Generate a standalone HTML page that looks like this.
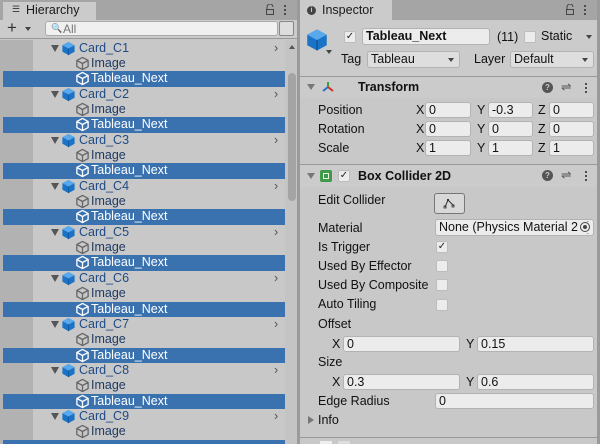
<!DOCTYPE html>
<html style="width:600px;height:444px;overflow:hidden"><head><meta charset="utf-8">
<style>
*{margin:0;padding:0;box-sizing:border-box}
body{width:600px;height:444px;overflow:hidden;background:#c8c8c8;font-family:"Liberation Sans",sans-serif;font-size:12.5px;color:#1a1a1a;position:relative}
.a{position:absolute}
.row{position:absolute;left:3px;width:282px;height:15.4px}
.sel{background:#3a72b0}
.t{position:absolute;top:0;line-height:15px;white-space:nowrap}
.card{color:#1e4a86;left:76px}
.img{color:#1f3a62;left:88px}
.sel .t{color:#fff;left:88px}
.fld{position:absolute;background:#ececec;border:1px solid #b3b3b3;border-radius:3px;height:16px;line-height:14px;padding-left:3px;font-size:12.5px;color:#111;white-space:nowrap;overflow:hidden}
.lbl{position:absolute;line-height:15px;white-space:nowrap;color:#111}
.cb{position:absolute;width:12px;height:12px;background:#ececec;border:1px solid #bdbdbd;border-radius:2px}
.chk{font-size:10px;line-height:10px;text-align:center;color:#222}
.line{position:absolute;height:1px;background:#999}
</style></head><body>
<svg width="0" height="0" style="position:absolute">
<defs>
<symbol id="bc" viewBox="0 0 16 16"><path d="M8 1 L14.5 4.5 L14.5 11.5 L8 15 L1.5 11.5 L1.5 4.5Z" fill="#1b73c8"/><path d="M1.5 4.5 L8 8 L14.5 4.5 L8 1Z" fill="#5aa8ec"/><path d="M8 8 L8 15" stroke="#0e4f94" stroke-width="0.8"/></symbol>
<symbol id="oc" viewBox="0 0 16 16"><path d="M8 1.5 L14 4.7 L14 11.3 L8 14.5 L2 11.3 L2 4.7Z M2 4.7 L8 8 L14 4.7 M8 8 L8 14.5" fill="none" stroke="currentColor" stroke-width="1.4" stroke-linejoin="round"/></symbol>
</defs></svg>

<!-- LEFT PANEL -->
<div class="a" style="left:0;top:0;width:298px;height:20px;background:#a5a5a5"></div>
<div class="a" style="left:3px;top:2px;width:93px;height:19px;background:#cbcbcb"></div>
<div class="a" style="left:12px;top:4px;font-size:9px;color:#333">☰</div>
<div class="a" style="left:26px;top:3px;font-size:12.5px;line-height:15px">Hierarchy</div>
<svg class="a" style="left:265px;top:4px" width="10" height="11"><path d="M2 5 V3 a3 3 0 0 1 6 0" fill="none" stroke="#444" stroke-width="1"/><rect x="1.5" y="5.5" width="7" height="5" fill="none" stroke="#444"/></svg>
<div class="a" style="left:284px;top:4px;width:2px;height:12px;background:radial-gradient(circle,#444 1px,transparent 1.2px) 0 0/2px 4px"></div>
<div class="a" style="left:0;top:20px;width:298px;height:19px;background:#cbcbcb;border-bottom:1px solid #999"></div>
<div class="a" style="left:7px;top:19px;font-size:17px;line-height:18px;color:#333">+</div>
<div class="a" style="left:25px;top:27px;width:0;height:0;border-left:3px solid transparent;border-right:3px solid transparent;border-top:4px solid #444"></div>
<div class="a" style="left:45px;top:21px;width:233px;height:15px;background:#f0f0f0;border:1px solid #aaa;border-radius:3px"></div>
<div class="a" style="left:51px;top:21px;font-size:9px;line-height:15px;color:#666">🔍</div>
<div class="a" style="left:63px;top:22px;font-size:12px;line-height:14px;color:#777">All</div>
<div class="a" style="left:279px;top:21px;width:15px;height:15px;border:1px solid #888;border-radius:2px;background:#ddd"></div>
<div class="a" style="left:0;top:40px;width:33px;height:404px;background:#b2b2b2"></div>
<div class="a" style="left:33px;top:40px;width:252px;height:404px;background:#c8c8c8"></div>
<div class="a" style="left:285px;top:40px;width:12px;height:404px;background:#c4c4c4"></div>
<div class="a" style="left:289px;top:45px;width:0;height:0;border-left:3px solid transparent;border-right:3px solid transparent;border-bottom:4px solid #555"></div>
<div class="a" style="left:288px;top:73px;width:8px;height:128px;background:#a4a4a4;border-radius:4px"></div>
<div class="a" style="left:297px;top:0;width:3px;height:444px;background:#9a9a9a"></div>

<!-- rows -->
<div class="row" style="top:40.5px"><span class="a" style="left:48px;top:4px;border-left:4px solid transparent;border-right:4px solid transparent;border-top:7px solid #555"></span><svg class="a" style="left:58px;top:0" width="15" height="15"><use href="#bc"/></svg><span class="t card">Card_C1</span><span class="a" style="left:271px;top:0;color:#555;line-height:15px">›</span></div>
<div class="row" style="top:55.9px"><svg class="a" style="left:72px;top:0;color:#666" width="15" height="15"><use href="#oc"/></svg><span class="t img">Image</span></div>
<div class="row sel" style="top:71.2px"><svg class="a" style="left:72px;top:0;color:#fff" width="15" height="15"><use href="#oc"/></svg><span class="t">Tableau_Next</span></div>

<div class="row" style="top:86.6px"><span class="a" style="left:48px;top:4px;border-left:4px solid transparent;border-right:4px solid transparent;border-top:7px solid #555"></span><svg class="a" style="left:58px;top:0" width="15" height="15"><use href="#bc"/></svg><span class="t card">Card_C2</span><span class="a" style="left:271px;top:0;color:#555;line-height:15px">›</span></div>
<div class="row" style="top:101.9px"><svg class="a" style="left:72px;top:0;color:#666" width="15" height="15"><use href="#oc"/></svg><span class="t img">Image</span></div>
<div class="row sel" style="top:117.3px"><svg class="a" style="left:72px;top:0;color:#fff" width="15" height="15"><use href="#oc"/></svg><span class="t">Tableau_Next</span></div>

<div class="row" style="top:132.6px"><span class="a" style="left:48px;top:4px;border-left:4px solid transparent;border-right:4px solid transparent;border-top:7px solid #555"></span><svg class="a" style="left:58px;top:0" width="15" height="15"><use href="#bc"/></svg><span class="t card">Card_C3</span><span class="a" style="left:271px;top:0;color:#555;line-height:15px">›</span></div>
<div class="row" style="top:148px"><svg class="a" style="left:72px;top:0;color:#666" width="15" height="15"><use href="#oc"/></svg><span class="t img">Image</span></div>
<div class="row sel" style="top:163.3px"><svg class="a" style="left:72px;top:0;color:#fff" width="15" height="15"><use href="#oc"/></svg><span class="t">Tableau_Next</span></div>

<div class="row" style="top:178.7px"><span class="a" style="left:48px;top:4px;border-left:4px solid transparent;border-right:4px solid transparent;border-top:7px solid #555"></span><svg class="a" style="left:58px;top:0" width="15" height="15"><use href="#bc"/></svg><span class="t card">Card_C4</span><span class="a" style="left:271px;top:0;color:#555;line-height:15px">›</span></div>
<div class="row" style="top:194px"><svg class="a" style="left:72px;top:0;color:#666" width="15" height="15"><use href="#oc"/></svg><span class="t img">Image</span></div>
<div class="row sel" style="top:209.4px"><svg class="a" style="left:72px;top:0;color:#fff" width="15" height="15"><use href="#oc"/></svg><span class="t">Tableau_Next</span></div>

<div class="row" style="top:224.7px"><span class="a" style="left:48px;top:4px;border-left:4px solid transparent;border-right:4px solid transparent;border-top:7px solid #555"></span><svg class="a" style="left:58px;top:0" width="15" height="15"><use href="#bc"/></svg><span class="t card">Card_C5</span><span class="a" style="left:271px;top:0;color:#555;line-height:15px">›</span></div>
<div class="row" style="top:240.1px"><svg class="a" style="left:72px;top:0;color:#666" width="15" height="15"><use href="#oc"/></svg><span class="t img">Image</span></div>
<div class="row sel" style="top:255.4px"><svg class="a" style="left:72px;top:0;color:#fff" width="15" height="15"><use href="#oc"/></svg><span class="t">Tableau_Next</span></div>

<div class="row" style="top:270.8px"><span class="a" style="left:48px;top:4px;border-left:4px solid transparent;border-right:4px solid transparent;border-top:7px solid #555"></span><svg class="a" style="left:58px;top:0" width="15" height="15"><use href="#bc"/></svg><span class="t card">Card_C6</span><span class="a" style="left:271px;top:0;color:#555;line-height:15px">›</span></div>
<div class="row" style="top:286.1px"><svg class="a" style="left:72px;top:0;color:#666" width="15" height="15"><use href="#oc"/></svg><span class="t img">Image</span></div>
<div class="row sel" style="top:301.5px"><svg class="a" style="left:72px;top:0;color:#fff" width="15" height="15"><use href="#oc"/></svg><span class="t">Tableau_Next</span></div>

<div class="row" style="top:316.8px"><span class="a" style="left:48px;top:4px;border-left:4px solid transparent;border-right:4px solid transparent;border-top:7px solid #555"></span><svg class="a" style="left:58px;top:0" width="15" height="15"><use href="#bc"/></svg><span class="t card">Card_C7</span><span class="a" style="left:271px;top:0;color:#555;line-height:15px">›</span></div>
<div class="row" style="top:332.2px"><svg class="a" style="left:72px;top:0;color:#666" width="15" height="15"><use href="#oc"/></svg><span class="t img">Image</span></div>
<div class="row sel" style="top:347.5px"><svg class="a" style="left:72px;top:0;color:#fff" width="15" height="15"><use href="#oc"/></svg><span class="t">Tableau_Next</span></div>

<div class="row" style="top:362.9px"><span class="a" style="left:48px;top:4px;border-left:4px solid transparent;border-right:4px solid transparent;border-top:7px solid #555"></span><svg class="a" style="left:58px;top:0" width="15" height="15"><use href="#bc"/></svg><span class="t card">Card_C8</span><span class="a" style="left:271px;top:0;color:#555;line-height:15px">›</span></div>
<div class="row" style="top:378.2px"><svg class="a" style="left:72px;top:0;color:#666" width="15" height="15"><use href="#oc"/></svg><span class="t img">Image</span></div>
<div class="row sel" style="top:393.6px"><svg class="a" style="left:72px;top:0;color:#fff" width="15" height="15"><use href="#oc"/></svg><span class="t">Tableau_Next</span></div>

<div class="row" style="top:408.9px"><span class="a" style="left:48px;top:4px;border-left:4px solid transparent;border-right:4px solid transparent;border-top:7px solid #555"></span><svg class="a" style="left:58px;top:0" width="15" height="15"><use href="#bc"/></svg><span class="t card">Card_C9</span><span class="a" style="left:271px;top:0;color:#555;line-height:15px">›</span></div>
<div class="row" style="top:424.3px"><svg class="a" style="left:72px;top:0;color:#666" width="15" height="15"><use href="#oc"/></svg><span class="t img">Image</span></div>
<div class="row sel" style="top:439.6px;height:4.4px"></div>

<!-- RIGHT PANEL -->
<div class="a" style="left:300px;top:0;width:300px;height:20px;background:#a5a5a5"></div>
<div class="a" style="left:300px;top:0;width:92px;height:21px;background:#cbcbcb"></div>
<div class="a" style="left:307px;top:6px;width:9px;height:9px;border-radius:50%;background:#444;color:#cbcbcb;font-size:7px;line-height:9px;text-align:center;font-weight:bold">i</div>
<div class="a" style="left:322px;top:3px;font-size:12.5px;line-height:15px">Inspector</div>
<svg class="a" style="left:565px;top:4px" width="10" height="11"><path d="M2 5 V3 a3 3 0 0 1 6 0" fill="none" stroke="#444" stroke-width="1"/><rect x="1.5" y="5.5" width="7" height="5" fill="none" stroke="#444"/></svg>
<div class="a" style="left:584px;top:4px;width:2px;height:12px;background:radial-gradient(circle,#444 1px,transparent 1.2px) 0 0/2px 4px"></div>
<div class="a" style="left:300px;top:21px;width:297px;height:55px;background:#cbcbcb"></div>
<svg class="a" style="left:305px;top:28px" width="24" height="24"><use href="#bc"/></svg>
<div class="a" style="left:326px;top:50px;border-left:3px solid transparent;border-right:3px solid transparent;border-top:4px solid #444"></div>
<div class="cb chk" style="left:344px;top:31px">✓</div>
<div class="fld" style="left:362px;top:28px;width:128px;height:17px;font-weight:bold;line-height:15px;font-size:12.5px">Tableau_Next</div>
<div class="lbl" style="left:497px;top:30px">(11)</div>
<div class="cb" style="left:524px;top:31px;width:12px"></div>
<div class="lbl" style="left:541px;top:29px;font-size:12.5px">Static</div>
<div class="a" style="left:586px;top:35px;border-left:3px solid transparent;border-right:3px solid transparent;border-top:4px solid #444"></div>
<div class="lbl" style="left:341px;top:52px">Tag</div>
<div class="fld" style="left:367px;top:51px;width:93px;height:17px;background:#dedede">Tableau</div>
<div class="a" style="left:448px;top:58px;border-left:3px solid transparent;border-right:3px solid transparent;border-top:4px solid #444"></div>
<div class="lbl" style="left:474px;top:52px">Layer</div>
<div class="fld" style="left:510px;top:51px;width:84px;height:17px;background:#dedede">Default</div>
<div class="a" style="left:582px;top:58px;border-left:3px solid transparent;border-right:3px solid transparent;border-top:4px solid #444"></div>
<div class="line" style="left:300px;top:76px;width:297px"></div>

<!-- Transform -->
<div class="a" style="left:300px;top:77px;width:297px;height:21px;background:#cbcbcb"></div>
<div class="a" style="left:307px;top:84px;border-left:4px solid transparent;border-right:4px solid transparent;border-top:6px solid #777"></div>
<svg class="a" style="left:321px;top:80px" width="14" height="14"><path d="M7 7 V2" stroke="#3aa03a" stroke-width="2"/><path d="M7 7 L2 11" stroke="#2a6fd0" stroke-width="2"/><path d="M7 7 L12 11" stroke="#d03030" stroke-width="2"/></svg>
<div class="lbl" style="left:358px;top:80px;font-weight:bold;font-size:12.5px">Transform</div>
<div class="a" style="left:542px;top:82px;width:11px;height:11px;border-radius:50%;background:#555;color:#cbcbcb;font-size:8px;line-height:11px;text-align:center;font-weight:bold">?</div>
<div class="lbl" style="left:561px;top:80px;color:#555">⇌</div>
<div class="a" style="left:585px;top:82px;width:2px;height:12px;background:radial-gradient(circle,#444 1px,transparent 1.2px) 0 0/2px 4px"></div>

<div class="lbl" style="left:318px;top:103px">Position</div>
<div class="lbl" style="left:416px;top:103px">X</div><div class="fld" style="left:425px;top:102px;width:46px">0</div>
<div class="lbl" style="left:477px;top:103px">Y</div><div class="fld" style="left:488px;top:102px;width:45px">-0.3</div>
<div class="lbl" style="left:538px;top:103px">Z</div><div class="fld" style="left:549px;top:102px;width:45px">0</div>
<div class="lbl" style="left:318px;top:122px">Rotation</div>
<div class="lbl" style="left:416px;top:122px">X</div><div class="fld" style="left:425px;top:121px;width:46px">0</div>
<div class="lbl" style="left:477px;top:122px">Y</div><div class="fld" style="left:488px;top:121px;width:45px">0</div>
<div class="lbl" style="left:538px;top:122px">Z</div><div class="fld" style="left:549px;top:121px;width:45px">0</div>
<div class="lbl" style="left:318px;top:141px">Scale</div>
<div class="lbl" style="left:416px;top:141px">X</div><div class="fld" style="left:425px;top:140px;width:46px">1</div>
<div class="lbl" style="left:477px;top:141px">Y</div><div class="fld" style="left:488px;top:140px;width:45px">1</div>
<div class="lbl" style="left:538px;top:141px">Z</div><div class="fld" style="left:549px;top:140px;width:45px">1</div>
<div class="line" style="left:300px;top:164px;width:297px"></div>

<!-- Box Collider -->
<div class="a" style="left:300px;top:165px;width:297px;height:22px;background:#cbcbcb"></div>
<div class="a" style="left:307px;top:173px;border-left:4px solid transparent;border-right:4px solid transparent;border-top:6px solid #777"></div>
<div class="a" style="left:320px;top:170px;width:12px;height:12px;background:#3e9a48;border-radius:2px"><div style="margin:3px;width:6px;height:6px;border:1px solid #e8f5e8"></div></div>
<div class="cb chk" style="left:338px;top:170px">✓</div>
<div class="lbl" style="left:358px;top:169px;font-weight:bold;font-size:12.5px">Box Collider 2D</div>
<div class="a" style="left:542px;top:170px;width:11px;height:11px;border-radius:50%;background:#555;color:#cbcbcb;font-size:8px;line-height:11px;text-align:center;font-weight:bold">?</div>
<div class="lbl" style="left:561px;top:168px;color:#555">⇌</div>
<div class="a" style="left:585px;top:170px;width:2px;height:12px;background:radial-gradient(circle,#444 1px,transparent 1.2px) 0 0/2px 4px"></div>

<div class="lbl" style="left:318px;top:193px">Edit Collider</div>
<div class="a" style="left:434px;top:193px;width:31px;height:21px;background:#d8d8d8;border:1px solid #777;border-radius:3px"></div>
<svg class="a" style="left:442px;top:197px" width="14" height="13"><path d="M3 10 L6 3 L9 6 L12 9" fill="none" stroke="#333" stroke-width="1"/><rect x="5" y="2" width="2" height="2" fill="#333"/><rect x="2" y="9" width="2" height="2" fill="none" stroke="#333" stroke-width="0.8"/><rect x="10" y="8" width="2" height="2" fill="none" stroke="#333" stroke-width="0.8"/></svg>
<div class="lbl" style="left:318px;top:221px">Material</div>
<div class="fld" style="left:435px;top:219px;width:159px;height:17px;padding-right:16px">None (Physics Material 2D)</div>
<div class="a" style="left:579px;top:222px;width:12px;height:11px;background:#ececec"></div>
<div class="a" style="left:580px;top:222px;width:10px;height:10px;border:1px solid #444;border-radius:50%;background:#ececec"><div style="margin:2px;width:4px;height:4px;border-radius:50%;background:#444"></div></div>
<div class="lbl" style="left:318px;top:240px">Is Trigger</div>
<div class="cb chk" style="left:436px;top:241px">✓</div>
<div class="lbl" style="left:318px;top:259px">Used By Effector</div>
<div class="cb" style="left:436px;top:260px"></div>
<div class="lbl" style="left:318px;top:278px">Used By Composite</div>
<div class="cb" style="left:436px;top:279px"></div>
<div class="lbl" style="left:318px;top:297px">Auto Tiling</div>
<div class="cb" style="left:436px;top:299px"></div>
<div class="lbl" style="left:318px;top:317px">Offset</div>
<div class="lbl" style="left:332px;top:337px">X</div><div class="fld" style="left:343px;top:336px;width:117px">0</div>
<div class="lbl" style="left:466px;top:337px">Y</div><div class="fld" style="left:477px;top:336px;width:117px">0.15</div>
<div class="lbl" style="left:318px;top:355px">Size</div>
<div class="lbl" style="left:332px;top:375px">X</div><div class="fld" style="left:343px;top:374px;width:117px">0.3</div>
<div class="lbl" style="left:466px;top:375px">Y</div><div class="fld" style="left:477px;top:374px;width:117px">0.6</div>
<div class="lbl" style="left:318px;top:394px">Edge Radius</div>
<div class="fld" style="left:435px;top:393px;width:159px">0</div>
<div class="a" style="left:308px;top:416px;border-top:4px solid transparent;border-bottom:4px solid transparent;border-left:6px solid #777"></div>
<div class="lbl" style="left:318px;top:413px">Info</div>
<div class="line" style="left:300px;top:437px;width:297px"></div>
<div class="a" style="left:320px;top:441px;width:12px;height:3px;background:#eee"></div>
<div class="a" style="left:338px;top:441px;width:12px;height:3px;background:#ddd"></div>
<div class="a" style="left:597px;top:0;width:3px;height:444px;background:#9a9a9a"></div>
</body></html>
